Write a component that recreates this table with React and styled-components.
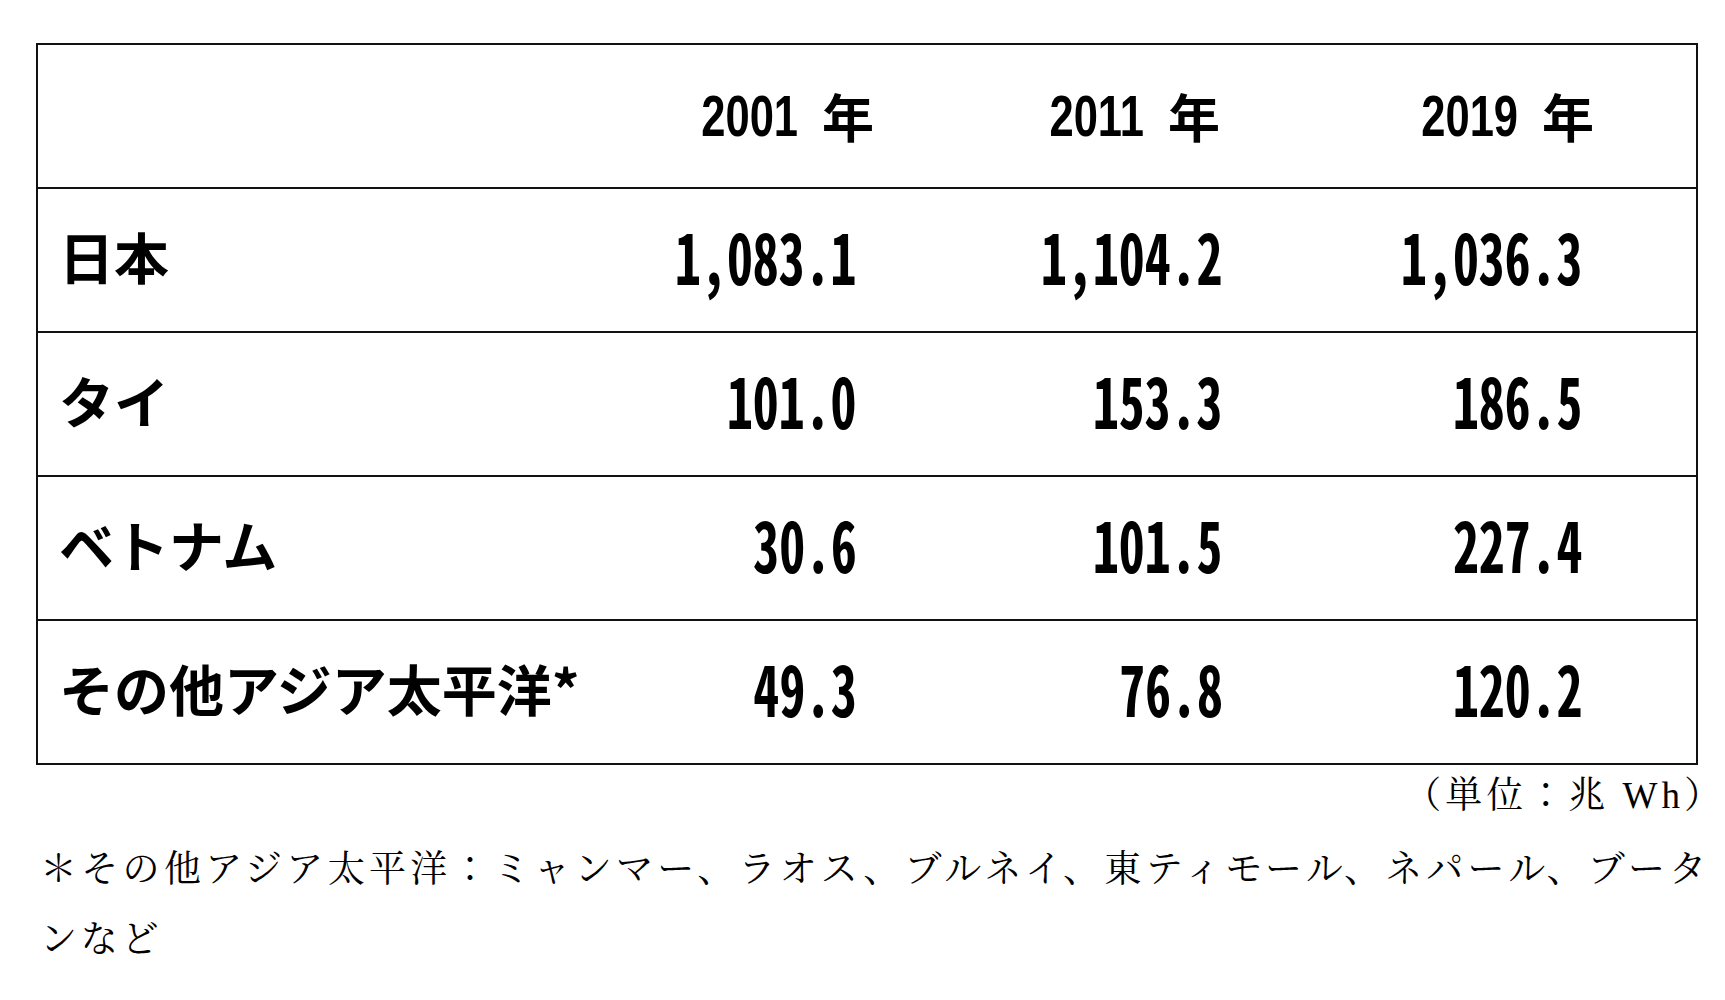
import styled, { createGlobalStyle } from 'styled-components'

const GlobalStyle = createGlobalStyle`
  html, body {
    margin: 0;
    padding: 0;
    background: #ffffff;
  }
`

const gothic = `"Noto Sans CJK JP", "Noto Sans", sans-serif`
const mincho = `"Liberation Serif", "Noto Serif CJK JP", "Noto Sans CJK JP", serif`

const Page = styled.div`
  width: 1725px;
  min-height: 1000px;
  padding-top: 43px;
  box-sizing: border-box;
  overflow: hidden;
  color: #000;
`

const Table = styled.div`
  margin-left: 36px;
  width: 1662px;
  box-sizing: border-box;
  border: 2px solid #111;
  display: flex;
  flex-direction: column;
`

const Row = styled.div`
  display: grid;
  grid-template-columns: 1fr 366px 366px 360px;
  height: 142px;

  & + & {
    border-top: 2px solid #111;
  }
`

const Cell = styled.div`
  display: flex;
  align-items: center;
  justify-content: ${({ $right }) => ($right ? 'flex-end' : 'flex-start')};
  padding-left: ${({ $right }) => ($right ? '0' : '21px')};
  padding-right: ${({ $pad }) => $pad || 0}px;
  min-width: 0;
`

const Label = styled.span`
  font-family: ${gothic};
  font-weight: 700;
  font-size: 55px;
  line-height: 1;
  white-space: nowrap;
  margin-bottom: 10px;
`

/* condensed, tall half-width digits like the original table */
const Num = styled.span`
  display: inline-block;
  font-family: "Noto Sans Mono CJK JP", "DejaVu Sans Mono", monospace;
  font-weight: 700;
  font-size: 71px;
  line-height: 1;
  white-space: nowrap;
  margin-bottom: 12px;
  transform: scaleX(0.73);
  transform-origin: right center;
`

const YearNum = styled.span`
  display: inline-block;
  font-family: "Liberation Sans", Arial, sans-serif;
  font-weight: 700;
  font-size: 58px;
  line-height: 1;
  transform: scaleX(0.75);
  transform-origin: right center;
`

const YearKanji = styled.span`
  font-family: ${gothic};
  font-weight: 700;
  font-size: 52px;
  line-height: 1;
  margin-left: 24px;
`

const Notes = styled.div`
  margin-left: 40px;
  width: 1670px;
  font-family: ${mincho};
`

const Unit = styled.div`
  text-align: right;
  line-height: 50px;
  margin-top: 6px;
  margin-right: -15px;
  font-size: 37px;
  letter-spacing: 4px;
`

const Footnote = styled.p`
  margin: 14px 0 0;
  line-height: 70px;
  font-size: 37px;
  letter-spacing: 3.7px;
  text-align: justify;
`

const years = [
  { year: '2001', pad: 96 },
  { year: '2011', pad: 116 },
  { year: '2019', pad: 102 },
]

const rows = [
  { label: '日本', values: ['1,083.1', '1,104.2', '1,036.3'] },
  { label: 'タイ', values: ['101.0', '153.3', '186.5'] },
  { label: 'ベトナム', values: ['30.6', '101.5', '227.4'] },
  { label: 'その他アジア太平洋*', values: ['49.3', '76.8', '120.2'] },
]

export default function App() {
  return (
    <Page>
      <GlobalStyle />
      <Table>
        <Row>
          <Cell />
          {years.map((y) => (
            <Cell key={y.year} $right $pad={y.pad}>
              <YearNum>{y.year}</YearNum>
              <YearKanji>年</YearKanji>
            </Cell>
          ))}
        </Row>

        {rows.map((r) => (
          <Row key={r.label}>
            <Cell>
              <Label>{r.label}</Label>
            </Cell>
            {r.values.map((v, i) => (
              <Cell key={i} $right $pad={113}>
                <Num>{v}</Num>
              </Cell>
            ))}
          </Row>
        ))}
      </Table>

      <Notes>
        <Unit>（単位：兆 Wh）</Unit>
        <Footnote>
          ＊その他アジア太平洋：ミャンマー、ラオス、ブルネイ、東ティモール、ネパール、ブータンなど
        </Footnote>
      </Notes>
    </Page>
  )
}
